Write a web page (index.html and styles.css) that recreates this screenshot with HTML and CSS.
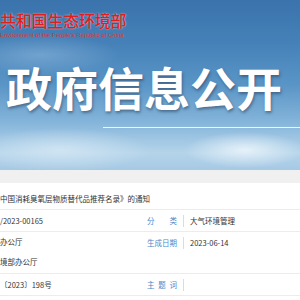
FILE: index.html
```html
<!DOCTYPE html>
<html lang="zh-CN">
<head>
  <meta charset="UTF-8">
  <meta name="viewport" content="width=device-width, initial-scale=1.0">
  <title>政府信息公开</title>
  <link rel="stylesheet" href="styles.css">
</head>
<body>
  <header class="banner">
    <div class="logo">
      <div class="logo-cn">共和国生态环境部</div>
      <div class="logo-en">Environment of the People's Republic of China</div>
    </div>
    <h1 class="banner-title">政府信息公开</h1>
    <div class="banner-rule"></div>
  </header>

  <div class="band"></div>

  <section class="info">
    <div class="row row-title">
      <div class="cell-left">中国消耗臭氧层物质替代品推荐名录》的通知</div>
    </div>
    <div class="row">
      <div class="cell-left">/2023-00165</div>
      <div class="label">分类</div>
      <div class="value">大气环境管理</div>
    </div>
    <div class="row row-tall">
      <div class="cell-left">
        <p>办公厅</p>
        <p>境部办公厅</p>
      </div>
      <div class="label">生成日期</div>
      <div class="value">2023-06-14</div>
    </div>
    <div class="row">
      <div class="cell-left">〔2023〕198号</div>
      <div class="label">主题词</div>
      <div class="value"></div>
    </div>
  </section>
</body>
</html>
```

FILE: styles.css
```css
* {
  margin: 0;
  padding: 0;
  box-sizing: border-box;
}

body {
  width: 300px;
  overflow: hidden;
  background-color: #fff;
  color: #333;
  font-family: 'Noto Sans CJK SC', 'Liberation Sans', sans-serif;
}

.banner {
  height: 170px;
  overflow: hidden;
  background:
    radial-gradient(ellipse 60px 18px at 245px 150px, rgba(235, 245, 251, 0.9), rgba(235, 245, 251, 0)),
    radial-gradient(ellipse 90px 22px at 60px 150px, rgba(220, 236, 247, 0.7), rgba(220, 236, 247, 0)),
    radial-gradient(ellipse 80px 20px at 40px 55px, rgba(150, 190, 225, 0.5), rgba(150, 190, 225, 0)),
    linear-gradient(to bottom, #3b73ac 0%, #4581b8 25%, #5a95c6 50%, #85b5da 72%, #b5d4ea 90%, #a6c9e4 100%);
}

.logo {
  padding-top: 11px;
  color: #e31d1a;
}

.logo-cn {
  font-size: 16px;
  font-weight: 500;
  line-height: 19px;
  letter-spacing: -0.2px;
  text-shadow: 0 0 2px rgba(255, 255, 255, 0.6);
}

.logo-en {
  margin-top: 1px;
  font-family: 'Liberation Sans', sans-serif;
  font-size: 6px;
  line-height: 8px;
  color: #e8322a;
  white-space: nowrap;
}

.banner-title {
  margin-top: 19px;
  padding-left: 6px;
  font-size: 46px;
  font-weight: bold;
  line-height: 56px;
  color: #fff;
  white-space: nowrap;
  text-shadow: 1px 2px 3px rgba(40, 60, 90, 0.55);
}

.banner-rule {
  margin: 13px 0 0 103px;
  height: 1px;
  background-color: rgba(255, 255, 255, 0.85);
}

.band {
  height: 13px;
  background-color: #f0f0f0;
}

.info {
  font-size: 7.5px;
}

.row {
  display: grid;
  grid-template-columns: 143px 41px 1fr;
  align-items: start;
  height: 22px;
  border-bottom: 1px solid #ececec;
  white-space: nowrap;
}

.row-title {
  grid-template-columns: 1fr;
  height: 27px;
  padding-top: 11px;
}

.row-tall {
  height: 42px;
}

.cell-left {
  overflow: hidden;
  line-height: 21px;
}

.row-title .cell-left {
  line-height: 10px;
}

.row-tall .cell-left p {
  line-height: 20px;
}

.label {
  margin-top: 5px;
  padding: 0 6px 0 4px;
  border-right: 1px solid #dcdcdc;
  color: #4a88cc;
  line-height: 12px;
  text-align: justify;
  text-align-last: justify;
}

.value {
  padding-left: 6px;
  line-height: 21px;
}
```
